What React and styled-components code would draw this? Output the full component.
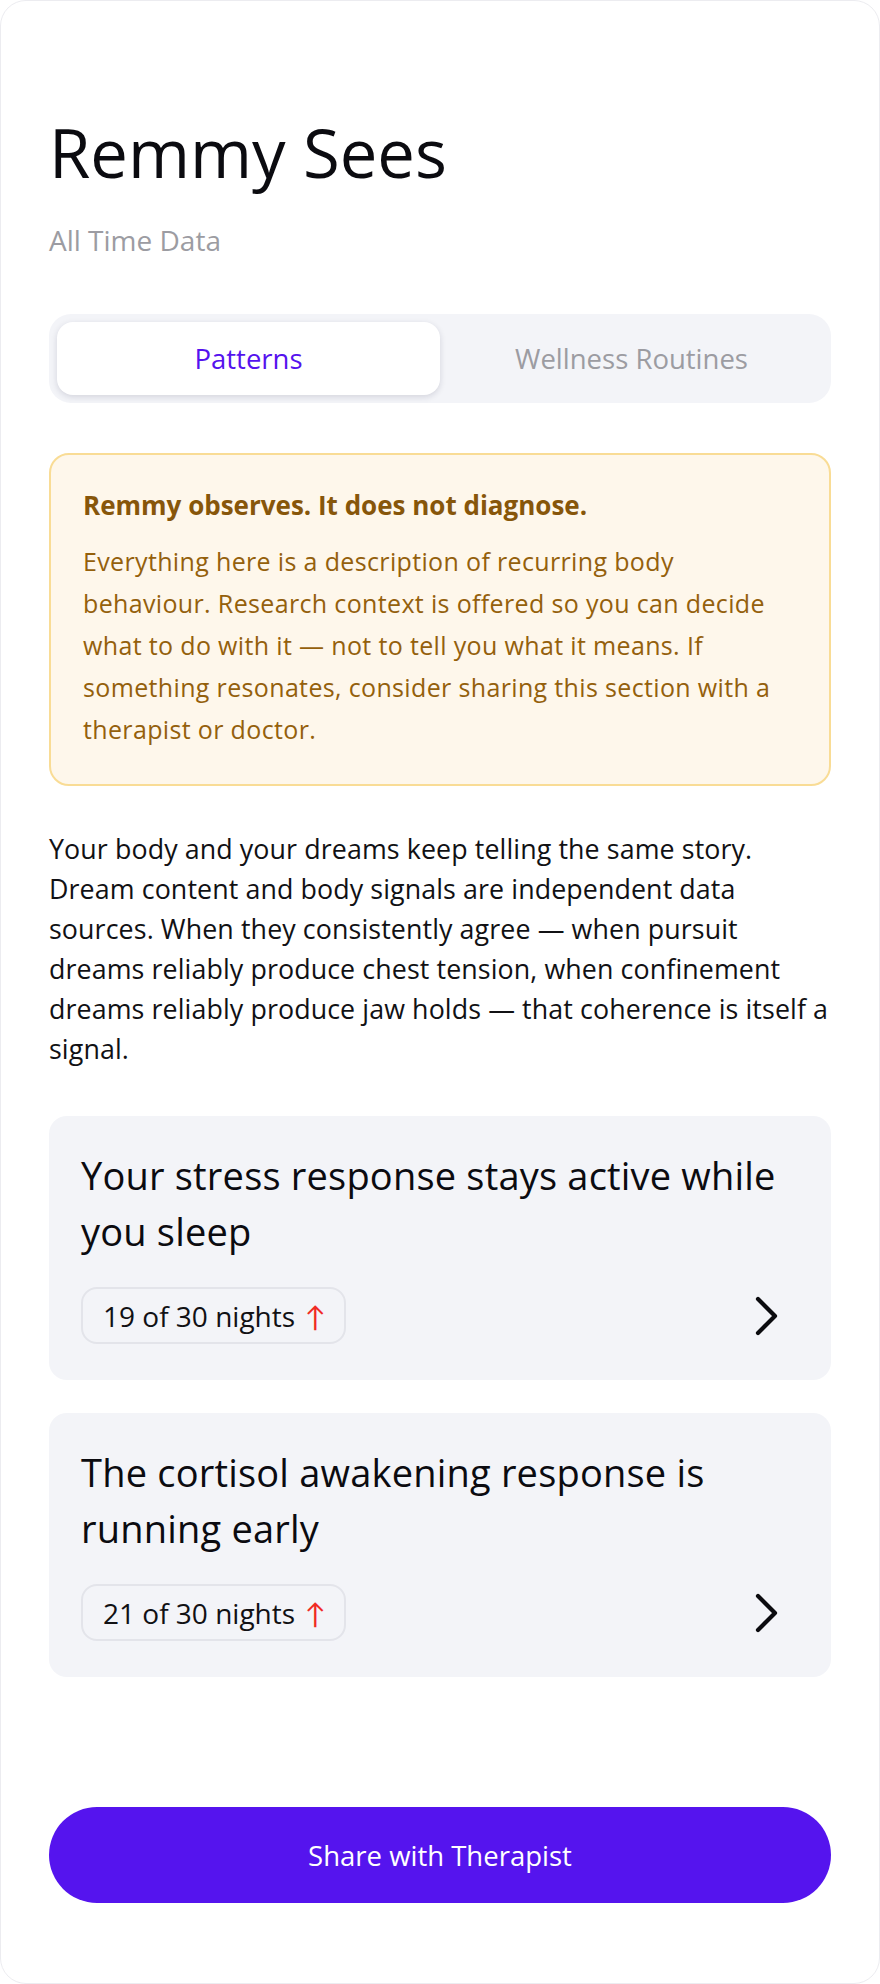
import React from 'react'
import styled, { createGlobalStyle } from 'styled-components'

const GlobalStyle = createGlobalStyle`
  * { box-sizing: border-box; }
  body {
    margin: 0;
    background: #ffffff;
    font-family: "Open Sans", Lato, sans-serif;
    color: #111114;
  }
`

const patterns = [
  { title: 'Your stress response stays active while you sleep', nights: 19, total: 30 },
  { title: 'The cortisol awakening response is running early', nights: 21, total: 30 },
]

const App = () => {
  return (
    <Page>
      <GlobalStyle />
      <Title>Remmy Sees</Title>
      <Subtitle>All Time Data</Subtitle>

      <Tabs>
        <Tab active>Patterns</Tab>
        <Tab>Wellness Routines</Tab>
      </Tabs>

      <Notice>
        <NoticeTitle>Remmy observes. It does not diagnose.</NoticeTitle>
        <NoticeText>
          Everything here is a description of recurring body behaviour. Research context is
          offered so you can decide what to do with it — not to tell you what it means. If
          something resonates, consider sharing this section with a therapist or doctor.
        </NoticeText>
      </Notice>

      <Intro>
        Your body and your dreams keep telling the same story. Dream content and body signals
        are independent data sources. When they consistently agree — when pursuit dreams
        reliably produce chest tension, when confinement dreams reliably produce jaw holds —
        that coherence is itself a signal.
      </Intro>

      <CardList>
        {patterns.map((p) => (
          <Card key={p.title}>
            <CardTitle>{p.title}</CardTitle>
            <CardFooter>
              <Pill>
                {p.nights} of {p.total} nights <Arrow>↑</Arrow>
              </Pill>
              <Chevron width="28" height="42" viewBox="0 0 28 42">
                <polyline points="5,4 22,21 5,38" fill="none" stroke="#0b0b0f" strokeWidth="4.2" strokeLinecap="round" strokeLinejoin="round" />
              </Chevron>
            </CardFooter>
          </Card>
        ))}
      </CardList>

      <Footer>
        <ShareButton>Share with Therapist</ShareButton>
      </Footer>
    </Page>
  )
}

const Page = styled.div`
  width: 880px;
  min-height: 1984px;
  padding: 111px 48px 80px;
  border: 1px solid #ececf0;
  border-radius: 26px;
  background: #ffffff;
  display: flex;
  flex-direction: column;
`

const Title = styled.h1`
  margin: 0;
  font-size: 67px;
  font-weight: 400;
  line-height: 80px;
  color: #0b0b10;
`

const Subtitle = styled.p`
  margin: 30px 0 0;
  font-size: 28px;
  line-height: 36px;
  color: #9c9ca2;
`

const Tabs = styled.div`
  margin-top: 56px;
  display: grid;
  grid-template-columns: 1fr 1fr;
  padding: 8px;
  height: 89px;
  background: #f3f4f8;
  border-radius: 22px;
`

const Tab = styled.div`
  display: flex;
  align-items: center;
  justify-content: center;
  font-size: 27.5px;
  border-radius: 16px;
  color: ${(p) => (p.active ? '#5512ee' : '#9c9ca2')};
  background: ${(p) => (p.active ? '#ffffff' : 'transparent')};
  box-shadow: ${(p) => (p.active ? '0 2px 6px rgba(20, 20, 60, 0.14)' : 'none')};
`

const Notice = styled.div`
  margin-top: 50px;
  padding: 32px 30px 34px 32px;
  background: #fef7eb;
  border: 2px solid #f9dc95;
  border-radius: 20px;
`

const NoticeTitle = styled.h3`
  margin: 0;
  font-size: 26px;
  font-weight: 700;
  line-height: 36px;
  color: #87560a;
`

const NoticeText = styled.p`
  margin: 17px 0 0;
  font-size: 25px;
  letter-spacing: 0.35px;
  line-height: 42px;
  color: #94600c;
`

const Intro = styled.p`
  margin: 43px 0 0;
  font-size: 26.8px;
  letter-spacing: 0.1px;
  line-height: 40px;
  color: #111114;
`

const CardList = styled.div`
  margin-top: 47px;
  display: flex;
  flex-direction: column;
  gap: 33px;
`

const Card = styled.div`
  background: #f3f4f8;
  border-radius: 18px;
  padding: 31px 32px 36px;
`

const CardTitle = styled.h2`
  margin: 0;
  font-size: 38px;
  letter-spacing: 0.2px;
  font-weight: 400;
  line-height: 56px;
  color: #0b0b10;
`

const CardFooter = styled.div`
  margin-top: 28px;
  display: flex;
  align-items: center;
  justify-content: space-between;
`

const Pill = styled.div`
  display: inline-flex;
  align-items: center;
  gap: 10px;
  height: 57px;
  padding: 0 18px 0 20px;
  border: 2px solid #e3e4ea;
  border-radius: 16px;
  font-size: 28px;
  color: #111114;
`

const Arrow = styled.span`
  color: #f02a25;
  font-size: 28px;
`

const Chevron = styled.svg`
  margin-right: 18px;
`

const Footer = styled.div`
  margin-top: auto;
`

const ShareButton = styled.button`
  width: 100%;
  height: 96px;
  border: none;
  border-radius: 48px;
  background: #5514ee;
  color: #ffffff;
  font-family: "Open Sans", Lato, sans-serif;
  font-size: 27.5px;
  cursor: pointer;
`

export default App
